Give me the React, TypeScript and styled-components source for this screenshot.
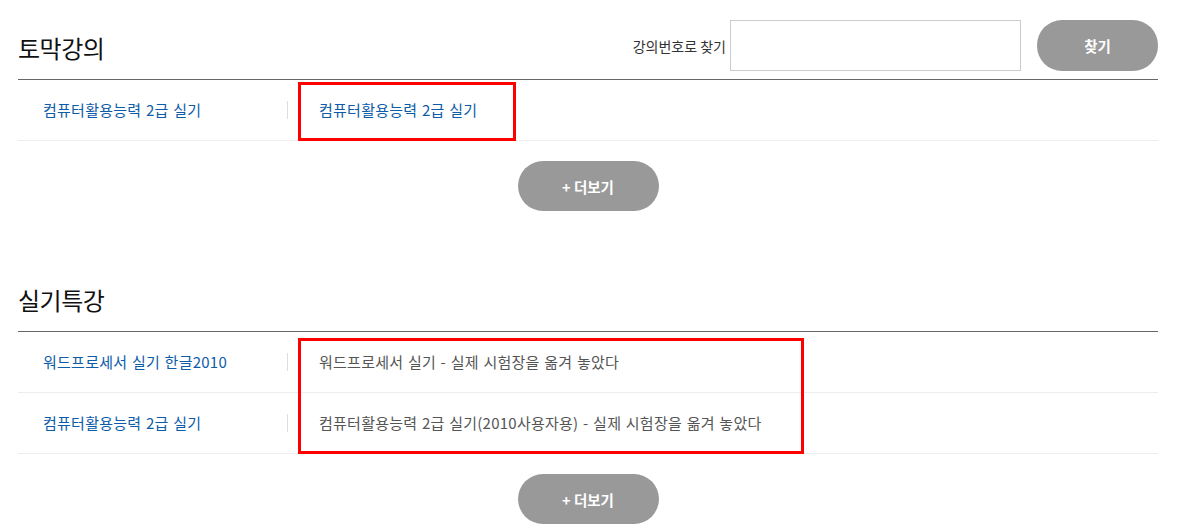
import React from 'react';
import styled, { createGlobalStyle } from 'styled-components';

const GlobalStyle = createGlobalStyle`
  html, body {
    margin: 0;
    padding: 0;
    background: #fff;
  }
  body {
    font-family: 'Noto Sans CJK KR', 'Noto Sans', sans-serif;
    color: #333;
  }
`;

const Page = styled.div`
  width: 1140px;
  padding: 0 0 0 18px;
`;

const Section = styled.section`
  & + & {
    margin-top: 41px;
  }
`;

const Header = styled.div`
  display: flex;
  align-items: center;
  justify-content: space-between;
  height: 51px;
  padding: 20px 0 8px;
  border-bottom: 1px solid #666;
`;

const Title = styled.h2`
  margin: 4px 0 0;
  font-size: 24px;
  font-weight: 400;
  line-height: 1;
  color: #111;
  letter-spacing: -0.5px;
`;

const Search = styled.div`
  display: flex;
  align-items: center;
  height: 51px;
`;

const SearchLabel = styled.label`
  font-size: 14px;
  color: #333;
  margin-right: 4px;
`;

const SearchInput = styled.input`
  box-sizing: border-box;
  width: 291px;
  height: 51px;
  border: 1px solid #ccc;
  outline: none;
  padding: 0 10px;
  font: inherit;
`;

const PillButton = styled.button<{ $width: number }>`
  box-sizing: border-box;
  width: ${(p) => p.$width}px;
  height: 50px;
  border: none;
  border-radius: 25px;
  background: #999;
  color: #fff;
  font-family: inherit;
  font-size: 14.5px;
  font-weight: 700;
  cursor: pointer;
`;

const FindButton = styled(PillButton)`
  height: 51px;
  margin-left: 16px;
`;

const List = styled.div`
  position: relative;
`;

const Row = styled.div`
  display: flex;
  align-items: center;
  height: 60px;
  border-bottom: 1px solid #eee;
`;

const LeftCell = styled.div`
  box-sizing: border-box;
  width: 270px;
  padding-left: 25px;
  font-size: 15px;
  color: #0d5ca8;
  letter-spacing: 0.25px;
  word-spacing: 1px;
  border-right: 1px solid #ddd;
  line-height: 18px;
`;

const RightCell = styled.div<{ $blue?: boolean }>`
  padding-left: 31px;
  font-size: 15px;
  color: ${(p) => (p.$blue ? '#0d5ca8' : '#555')};
  letter-spacing: 0.25px;
  word-spacing: 1px;
  line-height: 18px;
`;

const Highlight = styled.div`
  position: absolute;
  box-sizing: border-box;
  border: 3px solid #f00;
  pointer-events: none;
`;

const MoreWrap = styled.div`
  display: flex;
  justify-content: center;
  padding-top: 20px;
`;

type Item = { name: string; desc: string; blue?: boolean };

type Box = { top: number; left: number; width: number; height: number };

function LectureSection({
  title,
  items,
  box,
  search,
}: {
  title: string;
  items: Item[];
  box: Box;
  search?: boolean;
}) {
  return (
    <Section>
      <Header>
        <Title>{title}</Title>
        {search && (
          <Search>
            <SearchLabel>강의번호로 찾기</SearchLabel>
            <SearchInput />
            <FindButton $width={121}>찾기</FindButton>
          </Search>
        )}
      </Header>
      <List>
        {items.map((item, i) => (
          <Row key={`${item.name}-${i}`}>
            <LeftCell>{item.name}</LeftCell>
            <RightCell $blue={item.blue}>{item.desc}</RightCell>
          </Row>
        ))}
        <Highlight
          style={{ top: box.top, left: box.left, width: box.width, height: box.height }}
        />
      </List>
      <MoreWrap>
        <PillButton $width={141}>+ 더보기</PillButton>
      </MoreWrap>
    </Section>
  );
}

export default function App() {
  return (
    <>
      <GlobalStyle />
      <Page>
        <LectureSection
          title="토막강의"
          search
          items={[{ name: '컴퓨터활용능력 2급 실기', desc: '컴퓨터활용능력 2급 실기', blue: true }]}
          box={{ top: 2, left: 280, width: 218, height: 59 }}
        />
        <LectureSection
          title="실기특강"
          items={[
            { name: '워드프로세서 실기 한글2010', desc: '워드프로세서 실기 - 실제 시험장을 옮겨 놓았다' },
            {
              name: '컴퓨터활용능력 2급 실기',
              desc: '컴퓨터활용능력 2급 실기(2010사용자용) - 실제 시험장을 옮겨 놓았다',
            },
          ]}
          box={{ top: 6, left: 280, width: 506, height: 116 }}
        />
      </Page>
    </>
  );
}
